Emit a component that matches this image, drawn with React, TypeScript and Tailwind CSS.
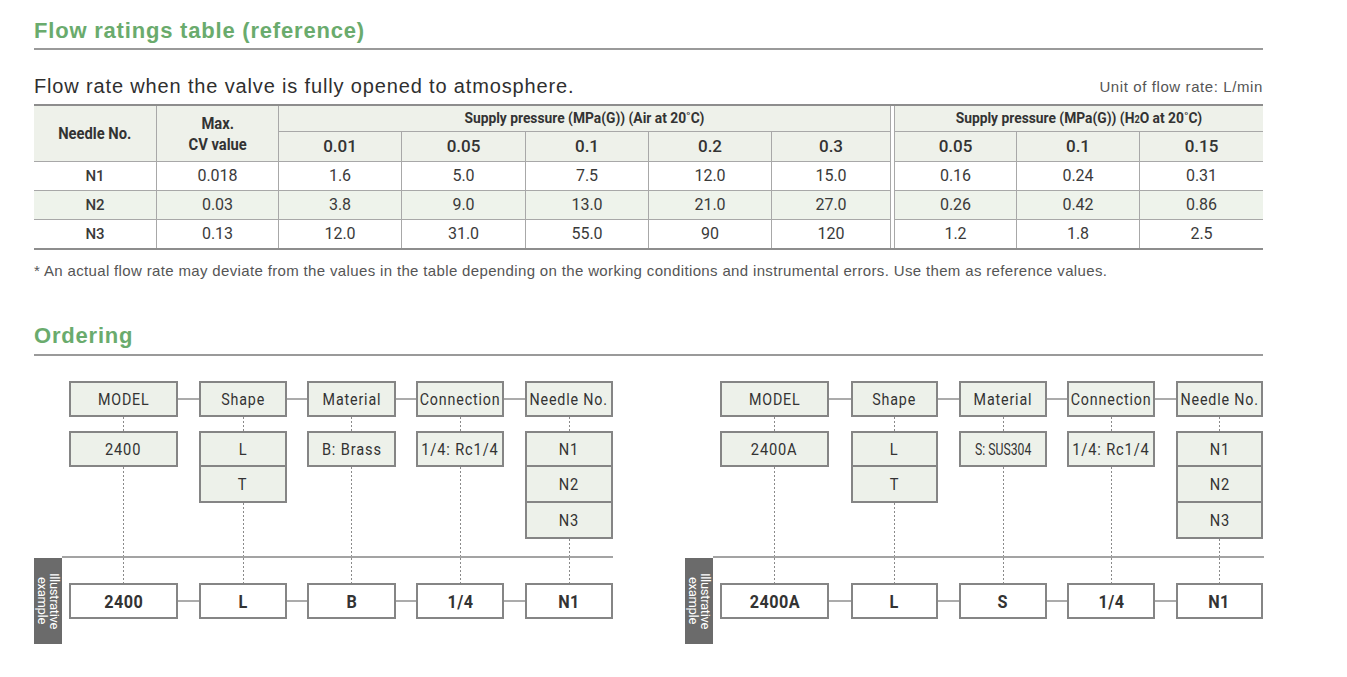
import React from "react";

const roboto = "font-['Roboto','Liberation_Sans',sans-serif]";
const sans = "font-['Liberation_Sans','Helvetica',sans-serif]";

const dotted =
  "w-px mx-auto bg-[linear-gradient(to_bottom,#8a8a8a_50%,transparent_50%)] [background-size:1px_4px]";

function C({ children, s = "scale-x-[0.86]" }: { children: React.ReactNode; s?: string }) {
  return <span className={`inline-block whitespace-nowrap ${s}`}>{children}</span>;
}

type Col = { head: string; width: number; options: string[]; example: string; optScale?: string };

function Diagram({ cols, gaps }: { cols: Col[]; gaps: number[] }) {
  return (
    <div className="flex">
      <div className="w-[28px] shrink-0 pt-[177px]">
        <div
          className={`h-[86px] w-[28px] bg-[#6b6b6b] text-white text-[13px] leading-[12px] tracking-[-0.3px] text-center [writing-mode:vertical-rl] flex items-center justify-center ${roboto}`}
        >
          Illustrative
          <br />
          example
        </div>
      </div>
      <div className="w-[551px] shrink-0">
        {/* top part */}
        <div className="h-[175px] pl-[7px] flex">
          {cols.map((c, i) => (
            <React.Fragment key={c.head}>
              <div className="flex flex-col h-full" style={{ width: c.width }}>
                <div
                  className={`h-[36px] border-2 border-[#858585] bg-[#edf1ea] flex items-center justify-center pt-[2px] text-[17px] tracking-[1px] text-[#333] ${roboto}`}
                >
                  <C s="scale-x-[0.84]">{c.head}</C>
                </div>
                <div className={`h-[14px] ${dotted}`} />
                <div className="border-2 border-[#858585] bg-[#edf1ea]">
                  {c.options.map((o, j) => (
                    <div
                      key={o}
                      className={`${j === 0 ? "h-[32px]" : "h-[36px] border-t-2 border-[#858585]"} flex items-center justify-center pt-[2px] text-[17px] tracking-[1px] text-[#333] ${roboto}`}
                    >
                      <C s={c.optScale ?? "scale-x-[0.86]"}>{o}</C>
                    </div>
                  ))}
                </div>
                <div className={`flex-1 ${dotted}`} />
              </div>
              {i < gaps.length && (
                <div className="h-[36px] flex items-center" style={{ width: gaps[i] }}>
                  <div className="h-[2px] w-full bg-[#ababab]" />
                </div>
              )}
            </React.Fragment>
          ))}
        </div>
        <div className="h-[2px] bg-[#a3a3a3]" />
        {/* bottom part */}
        <div className="pl-[7px] flex">
          {cols.map((c, i) => (
            <React.Fragment key={c.head}>
              <div className="flex flex-col" style={{ width: c.width }}>
                <div className={`h-[25px] ${dotted}`} />
                <div
                  className={`h-[36px] border-2 border-[#858585] bg-white flex items-center justify-center text-[18px] font-bold tracking-[0.5px] text-[#333] ${roboto}`}
                >
                  <C s="scale-x-[0.9]">{c.example}</C>
                </div>
              </div>
              {i < gaps.length && (
                <div className="pt-[25px]" style={{ width: gaps[i] }}>
                  <div className="h-[36px] flex items-center">
                    <div className="h-[2px] w-full bg-[#ababab]" />
                  </div>
                </div>
              )}
            </React.Fragment>
          ))}
        </div>
      </div>
    </div>
  );
}

const rows = [
  ["N1", "0.018", "1.6", "5.0", "7.5", "12.0", "15.0", "0.16", "0.24", "0.31"],
  ["N2", "0.03", "3.8", "9.0", "13.0", "21.0", "27.0", "0.26", "0.42", "0.86"],
  ["N3", "0.13", "12.0", "31.0", "55.0", "90", "120", "1.2", "1.8", "2.5"],
];

export default function App() {
  const bd = "border-[#a8a8a8]";
  const hdBg = "bg-[#eef1ea]";
  const cell = `flex items-center justify-center ${bd}`;

  return (
    <div className="w-[1347px] h-[677px] bg-white px-[34px] overflow-hidden">
      <div className="w-[1229px]">
        {/* Title */}
        <div className={`pt-[17px] h-[50px] border-b-2 border-[#9a9a9a] text-[22px] leading-[28px] tracking-[0.8px] font-bold text-[#6aab6d] ${sans}`}>
          Flow ratings table (reference)
        </div>
        <div className="flex items-end justify-between h-[54px] pb-[6px]">
          <div className={`text-[20px] leading-[24px] tracking-[0.85px] text-[#2f2f2f] ${sans}`}>
            Flow rate when the valve is fully opened to atmosphere.
          </div>
          <div className={`text-[15px] leading-[20px] tracking-[0.6px] text-[#555] pb-[1px] ${sans}`}>Unit of flow rate: L/min</div>
        </div>

        {/* Table */}
        <div className="border-t-2 border-b-2 border-[#8d8d8d]">
          <div className="grid grid-cols-[123px_122px_123px_124px_123px_123px_119px_4px_122px_123px_123px] grid-rows-[26px_30px_29px_29px_28px]">
            <div className={`${cell} ${hdBg} row-span-2 border-r border-b text-[16px] font-bold text-[#333] ${roboto}`}>
              <C s="scale-x-[0.92]">Needle No.</C>
            </div>
            <div className={`${cell} ${hdBg} row-span-2 border-r border-b flex-col text-[16px] leading-[21px] font-bold text-[#333] ${roboto}`}>
              <C s="scale-x-[0.92]">Max.</C>
              <C s="scale-x-[0.92]">CV value</C>
            </div>
            <div className={`${cell} ${hdBg} col-span-5 border-r border-b text-[15px] font-bold text-[#333] ${roboto}`}>
              <C s="scale-x-[0.92]">Supply pressure (MPa(G)) (Air at 20˚C)</C>
            </div>
            <div className={`row-span-5 border-r ${bd}`} />
            <div className={`${cell} ${hdBg} col-span-3 border-b text-[15px] font-bold text-[#333] ${roboto}`}>
              <C s="scale-x-[0.92]">
                Supply pressure (MPa(G)) (H<span className="text-[10px]">2</span>O at 20˚C)
              </C>
            </div>
            {["0.01", "0.05", "0.1", "0.2", "0.3", "0.05", "0.1", "0.15"].map((v, i) => (
              <div
                key={i}
                className={`${cell} ${hdBg} border-b ${i !== 7 ? "border-r" : ""} text-[17px] font-medium text-[#333] ${roboto}`}
              >
                {v}
              </div>
            ))}
            {rows.map((r, ri) =>
              r.map((v, ci) => (
                <div
                  key={`${ri}-${ci}`}
                  className={`${cell} ${ri === 1 ? "bg-[#eef3eb]" : "bg-white"} ${ri < 2 ? "border-b" : ""} ${ci !== 9 ? "border-r" : ""} ${
                    ci === 0 ? "text-[15px] font-medium" : "text-[16px]"
                  } ${roboto} text-[#3a3a3a]`}
                >
                  {v}
                </div>
              ))
            )}
          </div>
        </div>
        <div className={`mt-[12px] text-[15px] leading-[18px] tracking-[0.35px] text-[#555] ${sans}`}>
          * An actual flow rate may deviate from the values in the table depending on the working conditions and instrumental errors. Use them as reference values.
        </div>

        {/* Ordering */}
        <div className={`mt-[42px] h-[34px] border-b-2 border-[#9a9a9a] text-[22px] leading-[28px] tracking-[0.8px] font-bold text-[#6aab6d] ${sans}`}>
          Ordering
        </div>
        <div className="mt-[25px] flex gap-[72px]">
          <Diagram
            gaps={[21, 20, 20, 21]}
            cols={[
              { head: "MODEL", width: 109, options: ["2400"], example: "2400" },
              { head: "Shape", width: 88, options: ["L", "T"], example: "L" },
              { head: "Material", width: 89, options: ["B: Brass"], example: "B" },
              { head: "Connection", width: 88, options: ["1/4: Rc1/4"], example: "1/4" },
              { head: "Needle No.", width: 88, options: ["N1", "N2", "N3"], example: "N1" },
            ]}
          />
          <Diagram
            gaps={[22, 21, 20, 21]}
            cols={[
              { head: "MODEL", width: 109, options: ["2400A"], example: "2400A" },
              { head: "Shape", width: 87, options: ["L", "T"], example: "L" },
              { head: "Material", width: 88, options: ["S: SUS304"], example: "S", optScale: "scale-x-[0.72] tracking-[0px]" },
              { head: "Connection", width: 88, options: ["1/4: Rc1/4"], example: "1/4" },
              { head: "Needle No.", width: 87, options: ["N1", "N2", "N3"], example: "N1" },
            ]}
          />
        </div>
      </div>
    </div>
  );
}
